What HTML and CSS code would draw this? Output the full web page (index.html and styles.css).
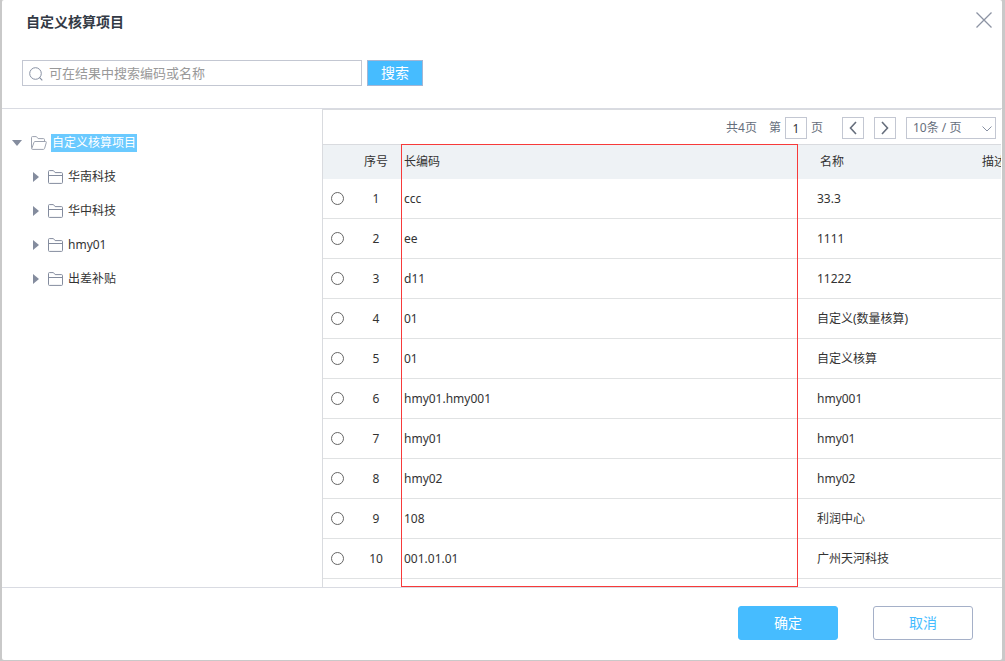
FILE: index.html
```html
<!DOCTYPE html>
<html lang="zh-CN">
<head>
<meta charset="utf-8">
<meta name="viewport" content="width=device-width, initial-scale=1">
<title>自定义核算项目</title>
<link rel="stylesheet" href="styles.css">
</head>
<body>
<svg class="sprite" aria-hidden="true">
  <symbol id="folder" viewBox="0 0 15 14"><path d="M.5 12.5v-11q0-.9.9-.9h4l1.7 2h6.4q1 0 1 1v8.900q0 .9-.9.9h-12.200q-.9 0-.9-.9zM.5 5.500h14" fill="none" stroke="currentColor"/></symbol>
  <symbol id="folder-open" viewBox="0 0 16 14"><path d="M.8 12.500q-.3 0-.3-.8V1.500q0-.9.9-.9h4l1.700 2h5.400q1 0 1 1v1.900M.8 12.500 3 6.300q.3-.8 1-.8h10.300q1.300 0 1 1l-1.700 5.900q-.3 1-1.200 1H1.500q-.9 0-.7-.9z" fill="none" stroke="currentColor"/></symbol>
</svg>
<main class="dialog" role="dialog" aria-labelledby="title">
  <header class="dialog-head">
    <h1 class="title" id="title">自定义核算项目</h1>
    <button class="close" type="button" aria-label="关闭"><svg width="16" height="16" viewBox="0 0 16 16"><path d="M.5.5l15 15M15.500.5l-15 15" fill="none" stroke="currentColor" stroke-width="1.300"/></svg></button>
  </header>
  <form class="search">
    <label class="search-box">
      <svg width="14" height="14" viewBox="0 0 14 14"><circle cx="6.500" cy="6.500" r="5.800" fill="none" stroke="currentColor"/><path d="M10.400 10.400 13.300 13.300" stroke="currentColor" stroke-width="1.200"/></svg>
      <input class="search-input" type="text" aria-label="搜索编码或名称" placeholder="可在结果中搜索编码或名称">
    </label>
    <button class="search-button" type="button">搜索</button>
  </form>
  <div class="content">
    <nav class="tree" aria-label="核算项目">
      <a class="node root" href="#"><span class="arrow-down"></span><svg class="folder-open"><use href="#folder-open"/></svg><span class="selected">自定义核算项目</span></a>
      <a class="node" href="#"><span class="arrow-right"></span><svg class="folder"><use href="#folder"/></svg><span>华南科技</span></a>
      <a class="node" href="#"><span class="arrow-right"></span><svg class="folder"><use href="#folder"/></svg><span>华中科技</span></a>
      <a class="node" href="#"><span class="arrow-right"></span><svg class="folder"><use href="#folder"/></svg><span>hmy01</span></a>
      <a class="node" href="#"><span class="arrow-right"></span><svg class="folder"><use href="#folder"/></svg><span>出差补贴</span></a>
    </nav>
    <section class="results">
      <div class="pager">
        <span class="total">共4页</span>
        <label class="page">第<input class="page-input" type="text" value="1">页</label>
        <button class="step" type="button" aria-label="上一页"><svg width="8" height="14" viewBox="0 0 8 14"><path d="M7 1 1.500 7 7 13" fill="none" stroke="currentColor" stroke-width="1.600"/></svg></button>
        <button class="step" type="button" aria-label="下一页"><svg width="8" height="14" viewBox="0 0 8 14"><path d="M1 1 6.500 7 1 13" fill="none" stroke="currentColor" stroke-width="1.600"/></svg></button>
        <span class="size">
          <select class="size-select" aria-label="每页条数"><option>10条 / 页</option></select>
          <svg class="size-arrow" width="10" height="6" viewBox="0 0 10 6"><path d="M.5.5 5 5 9.500.5" fill="none" stroke="currentColor"/></svg>
        </span>
      </div>
      <div class="grid">
        <table class="table">
          <colgroup><col class="col-pick"><col class="col-index"><col><col class="col-name"><col class="col-desc"></colgroup>
          <thead><tr><th></th><th class="index">序号</th><th>长编码</th><th class="name-head">名称</th><th>描述</th></tr></thead>
          <tbody>
            <tr><td><input class="radio" type="radio" name="item" aria-label="1"></td><td class="index">1</td><td>ccc</td><td class="name">33.3</td><td></td></tr>
            <tr><td><input class="radio" type="radio" name="item" aria-label="2"></td><td class="index">2</td><td>ee</td><td class="name">1111</td><td></td></tr>
            <tr><td><input class="radio" type="radio" name="item" aria-label="3"></td><td class="index">3</td><td>d11</td><td class="name">11222</td><td></td></tr>
            <tr><td><input class="radio" type="radio" name="item" aria-label="4"></td><td class="index">4</td><td>01</td><td class="name">自定义(数量核算)</td><td></td></tr>
            <tr><td><input class="radio" type="radio" name="item" aria-label="5"></td><td class="index">5</td><td>01</td><td class="name">自定义核算</td><td></td></tr>
            <tr><td><input class="radio" type="radio" name="item" aria-label="6"></td><td class="index">6</td><td>hmy01.hmy001</td><td class="name">hmy001</td><td></td></tr>
            <tr><td><input class="radio" type="radio" name="item" aria-label="7"></td><td class="index">7</td><td>hmy01</td><td class="name">hmy01</td><td></td></tr>
            <tr><td><input class="radio" type="radio" name="item" aria-label="8"></td><td class="index">8</td><td>hmy02</td><td class="name">hmy02</td><td></td></tr>
            <tr><td><input class="radio" type="radio" name="item" aria-label="9"></td><td class="index">9</td><td>108</td><td class="name">利润中心</td><td></td></tr>
            <tr><td><input class="radio" type="radio" name="item" aria-label="10"></td><td class="index">10</td><td>001.01.01</td><td class="name">广州天河科技</td><td></td></tr>
          </tbody>
        </table>
      </div>
      <div class="marker"></div>
    </section>
  </div>
  <footer class="actions">
    <button class="action primary" type="button">确定</button>
    <button class="action" type="button">取消</button>
  </footer>
</main>
</body>
</html>
```
FILE: styles.css
```css
* { box-sizing: border-box; }
body {
  margin: 0;
  padding: 0 3px 1px 2px;
  min-height: 100vh;
  display: flex;
  background: #c9c9c9;
  color: #333;
  font: 12px/18px "Noto Sans", "Noto Sans CJK SC", sans-serif;
}
button, input, select { font: inherit; color: inherit; margin: 0; padding: 0; border-radius: 0; }
button { cursor: pointer; }
svg { display: block; flex: none; }
.sprite { position: absolute; width: 0; height: 0; }
.dialog {
  flex: 1;
  min-width: 0;
  display: flex;
  flex-direction: column;
  background: #fff;
  border-radius: 2px;
}
.dialog-head {
  display: flex;
  justify-content: space-between;
  align-items: flex-start;
  padding: 12px 10px 0 24px;
}
.title { margin: 0; font-size: 14px; line-height: 20px; font-weight: 700; color: #333a45; }
.close { border: 0; background: none; color: #8c93a3; }
.search { display: flex; gap: 5px; padding: 28px 20px 22px; border-bottom: 1px solid #d9dbe2; }
.search-box {
  display: flex;
  align-items: center;
  gap: 6px;
  width: 340px;
  height: 26px;
  padding-left: 6px;
  border: 1px solid #c3c7d2;
  color: #8790a3;
}
.search-box svg { margin-top: 2px; }
.search-input { flex: 1; min-width: 0; border: 0; outline: 0; background: none; font-size: 13px; line-height: 20px; color: #333; }
.search-input::placeholder { color: #999; opacity: 1; }
.search-button { width: 56px; height: 26px; border: 1px solid #a5b6d4; background: #46bcff; color: #fff; font-size: 14px; }
.content { flex: 1; display: flex; }
.tree { width: 320px; flex: none; padding-top: 17px; }
.node { display: flex; align-items: center; height: 34px; padding-left: 31px; color: #333; text-decoration: none; }
.root { padding-left: 10px; }
.arrow-right { border: solid transparent; border-width: 5px 0 5px 6px; border-left-color: #848c9e; margin-right: 9px; }
.arrow-down { border: solid transparent; border-width: 6px 5px 0; border-top-color: #848c9e; margin-right: 9px; }
.folder { width: 15px; height: 14px; margin-right: 5px; color: #848c9e; }
.folder-open { width: 16px; height: 14px; margin-right: 4px; color: #9da3b0; }
.selected { padding: 0 1px; background: #6bcaff; color: #fff; }
.results {
  position: relative;
  flex: 1;
  min-width: 0;
  margin-right: 1px;
  border: solid #d9dbdf;
  border-width: 1px 0 0 1px;
}
.pager {
  display: flex;
  align-items: center;
  justify-content: flex-end;
  height: 35px;
  padding: 2px 5px 0 0;
  border-bottom: 1px solid #d9dbdf;
  color: #666e7c;
}
.total { margin-right: 12px; }
.page { display: flex; align-items: center; gap: 4px; margin-right: 19px; }
.page-input { width: 22px; height: 22px; border: 1px solid #c3c7d2; text-align: center; color: #333; }
.step { display: grid; place-items: center; width: 22px; height: 22px; margin-right: 10px; border: 1px solid #c3c7d2; background: #fff; }
.size { position: relative; }
.size-select { display: block; appearance: none; width: 90px; height: 22px; padding-left: 6px; border: 1px solid #c3c7d2; background: #fff; }
.size-arrow { position: absolute; right: 4px; top: 9px; color: #8790a3; pointer-events: none; }
.grid { overflow: hidden; padding-bottom: 8px; }
.table { width: calc(100% + 20px); table-layout: fixed; border-collapse: separate; border-spacing: 0; }
.col-pick { width: 28px; }
.col-index { width: 50px; }
.col-name { width: 180px; }
.col-desc { width: 42px; }
th, td { padding: 0 0 0 3px; text-align: left; white-space: nowrap; }
th { height: 34px; background: #eef2f5; font-weight: 400; }
td { height: 40px; border-bottom: 1px solid #e0e2e3; }
.index { padding: 0; text-align: center; }
.name-head { padding-left: 21px; }
.name { padding-left: 18px; }
.radio { display: block; margin-left: 5px; appearance: none; width: 13px; height: 13px; border: 1px solid #666; border-radius: 50%; background: #fff; }
.radio:checked { box-shadow: inset 0 0 0 3px #fff; background: #46bcff; }
.marker { position: absolute; top: 34px; right: 203px; bottom: 0; left: 78px; border: 1px solid #f73a3a; pointer-events: none; }
.actions {
  display: flex;
  justify-content: flex-end;
  gap: 35px;
  padding: 18px 29px 20px;
  border-top: 1px solid #d9dbe2;
}
.action { width: 100px; height: 34px; border: 1px solid #a5b0c8; border-radius: 3px; background: #fff; color: #46bcff; font-size: 14px; }
.primary { border-color: #46bcff; background: #46bcff; color: #fff; }
```
